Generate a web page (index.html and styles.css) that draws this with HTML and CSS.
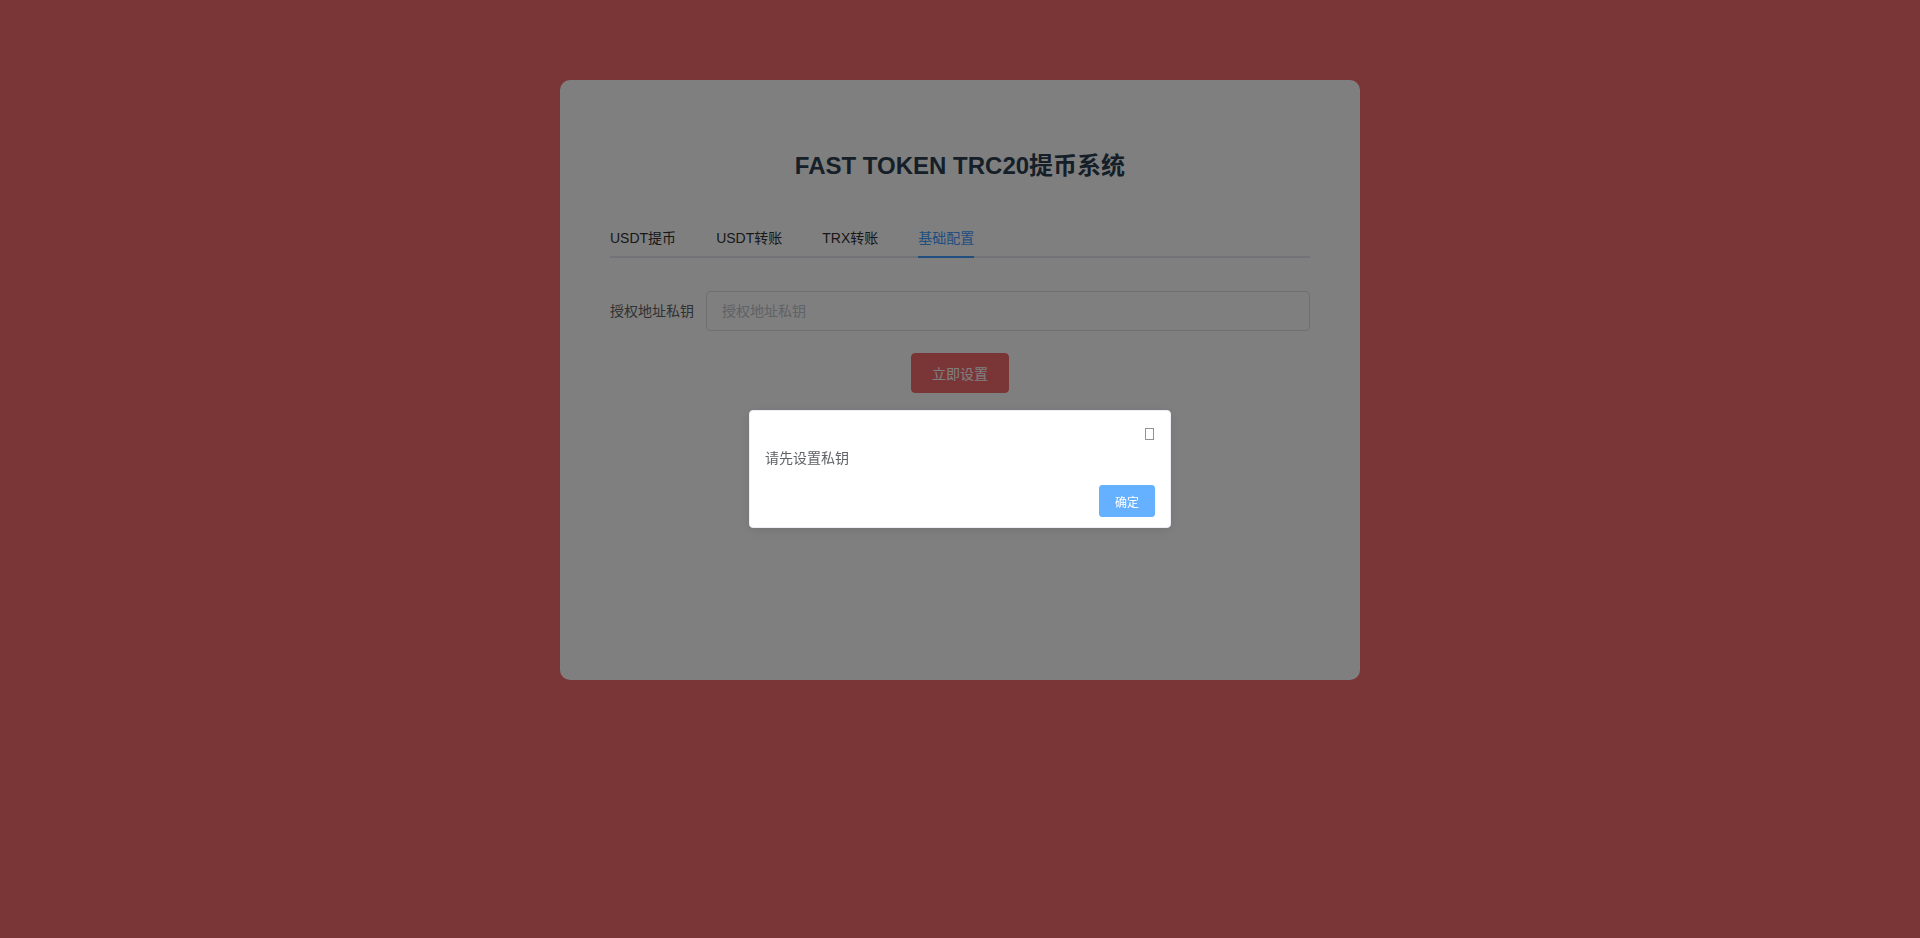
FILE: index.html
```html
<!DOCTYPE html>
<html lang="zh-CN">
<head>
<meta charset="utf-8">
<title>FAST TOKEN TRC20提币系统</title>
<link rel="stylesheet" href="styles.css">
</head>
<body>
<div class="page">
  <div class="card">
    <h2 class="title">FAST TOKEN TRC20提币系统</h2>
    <div class="tabs">
      <div class="tab">USDT提币</div>
      <div class="tab">USDT转账</div>
      <div class="tab">TRX转账</div>
      <div class="tab active">基础配置</div>
    </div>
    <form class="form">
      <div class="form-item">
        <label class="label">授权地址私钥</label>
        <input class="input" type="text" placeholder="授权地址私钥">
      </div>
      <div class="actions">
        <button type="button" class="btn-danger">立即设置</button>
      </div>
    </form>
  </div>
</div>
<div class="mask"></div>
<div class="msgbox-wrap">
  <div class="msgbox">
    <div class="msgbox-header"><span class="msgbox-close" aria-label="close"></span></div>
    <div class="msgbox-content">请先设置私钥</div>
    <div class="msgbox-btns"><button type="button" class="btn-primary">确定</button></div>
  </div>
</div>
</body>
</html>
```
FILE: styles.css
```css
* { box-sizing: border-box; }
html, body {
  margin: 0;
  padding: 0;
  height: 100%;
}
body {
  background: #f56c6c;
  font-family: "Liberation Sans", "Noto Sans CJK SC", sans-serif;
  color: #606266;
}
.page {
  padding-top: 80px;
}
.card {
  width: 800px;
  height: 600px;
  margin: 0 auto;
  background: #fff;
  border-radius: 10px;
  padding: 70px 50px 50px;
}
.title {
  margin: 0 0 36px;
  font-size: 24px;
  line-height: 32px;
  font-weight: bold;
  color: #2c3e50;
  text-align: center;
}
.tabs {
  display: flex;
  height: 40px;
  border-bottom: 2px solid #e4e7ed;
  margin-bottom: 33px;
}
.tab {
  height: 40px;
  line-height: 40px;
  padding: 0 20px;
  font-size: 14px;
  color: #303133;
  margin-bottom: -2px;
}
.tab:first-child { padding-left: 0; }
.tab:last-child { padding-right: 0; }
.tab.active {
  color: #409eff;
  background-image: linear-gradient(#409eff, #409eff);
  background-repeat: no-repeat;
  background-position: bottom;
  background-size: 100% 2px;
  background-origin: content-box;
  background-clip: content-box;
}
.form { margin: 0; }
.form-item {
  display: flex;
  align-items: center;
  margin-bottom: 22px;
}
.label {
  width: 96px;
  padding-right: 12px;
  font-size: 14px;
  color: #606266;
  line-height: 40px;
}
.input {
  flex: 1;
  height: 40px;
  border: 1px solid #dcdfe6;
  border-radius: 4px;
  padding: 0 15px;
  font-family: inherit;
  font-size: 14px;
  color: #606266;
  outline: none;
  background: #fff;
}
.input::placeholder { color: #c0c4cc; }
.actions {
  display: flex;
  justify-content: center;
}
.btn-danger {
  height: 40px;
  padding: 0 20px;
  border: 1px solid #f56c6c;
  background: #f56c6c;
  color: #fff;
  font-family: inherit;
  font-size: 14px;
  border-radius: 4px;
}
.mask {
  position: fixed;
  inset: 0;
  background: rgba(0, 0, 0, 0.5);
}
.msgbox-wrap {
  position: fixed;
  inset: 0;
  display: flex;
  align-items: center;
  justify-content: center;
}
.msgbox {
  box-sizing: content-box;
  width: 420px;
  background: #fff;
  border: 1px solid #ebeef5;
  border-radius: 4px;
  box-shadow: 0 2px 12px 0 rgba(0, 0, 0, 0.1);
  padding-bottom: 10px;
}
.msgbox-header {
  height: 25px;
  padding: 0 15px;
  display: flex;
  justify-content: flex-end;
  align-items: flex-start;
}
.msgbox-close {
  width: 9px;
  height: 12px;
  border: 1px solid #909399;
  margin-top: 17px;
  margin-right: 1px;
}
.msgbox-content {
  padding: 10px 15px;
  font-size: 14px;
  line-height: 24px;
  color: #606266;
}
.msgbox-btns {
  padding: 5px 15px 0;
  display: flex;
  justify-content: flex-end;
}
.btn-primary {
  width: 56px;
  height: 32px;
  padding: 0;
  border: 1px solid #66b1ff;
  background: #66b1ff;
  color: #fff;
  font-family: inherit;
  font-size: 12px;
  border-radius: 3px;
}
```
